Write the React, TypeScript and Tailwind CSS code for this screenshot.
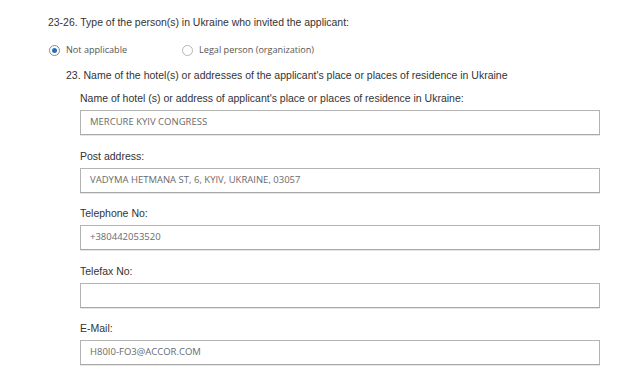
import React from "react";

const fields = [
  { label: "Name of hotel (s) or address of applicant's place or places of residence in Ukraine:", value: "MERCURE KYIV CONGRESS" },
  { label: "Post address:", value: "VADYMA HETMANA ST, 6, KYIV, UKRAINE, 03057" },
  { label: "Telephone No:", value: "+380442053520" },
  { label: "Telefax No:", value: "" },
  { label: "E-Mail:", value: "H80I0-FO3@ACCOR.COM" },
];

function Radio({ checked, label }: { checked?: boolean; label: string }) {
  return (
    <label className="flex items-center gap-[6px]">
      <span
        className={
          "flex h-[11px] w-[11px] items-center justify-center rounded-full border bg-white " +
          (checked ? "border-[#8a8a8a]" : "border-[#b5b5b5]")
        }
      >
        {checked && <span className="h-[5px] w-[5px] rounded-full bg-[#2a6ebb]" />}
      </span>
      <span className="text-[9.1px] leading-[14px] text-[#555] [font-family:'Open_Sans',Lato,sans-serif]">
        {label}
      </span>
    </label>
  );
}

export default function App() {
  return (
    <div className="h-[380px] w-[640px] overflow-hidden bg-white pl-[48px] pt-[16px] text-[#333] [font-family:'Liberation_Sans',Arial,sans-serif]">
      <p className="text-[10.45px] leading-[14px]">
        23-26. Type of the person(s) in Ukraine who invited the applicant:
      </p>

      <div className="mt-[13px] flex items-center gap-[55px] pl-[1px]">
        <Radio checked label="Not applicable" />
        <Radio label="Legal person (organization)" />
      </div>

      <p className="mt-[11px] pl-[18px] text-[10.5px] leading-[14px]">
        23. Name of the hotel(s) or addresses of the applicant's place or places of residence in Ukraine
      </p>

      <div className="mt-[9px] flex w-[520px] flex-col gap-[13.5px] pl-[32px] box-content">
        {fields.map((f) => (
          <div key={f.label} className="flex flex-col">
            <span className="mb-[5px] text-[10.5px] leading-[14px] text-[#333]">{f.label}</span>
            <div className="flex h-[25px] w-[520px] items-center border border-[#b4b4b4] border-b-[#a8a8a8] bg-white px-[9px] shadow-[0_1px_0_#e6e6e6]">
              <span className="text-[9.5px] text-[#6a6a6a] [font-family:'Open_Sans',Lato,sans-serif]">
                {f.value}
              </span>
            </div>
          </div>
        ))}
      </div>
    </div>
  );
}
